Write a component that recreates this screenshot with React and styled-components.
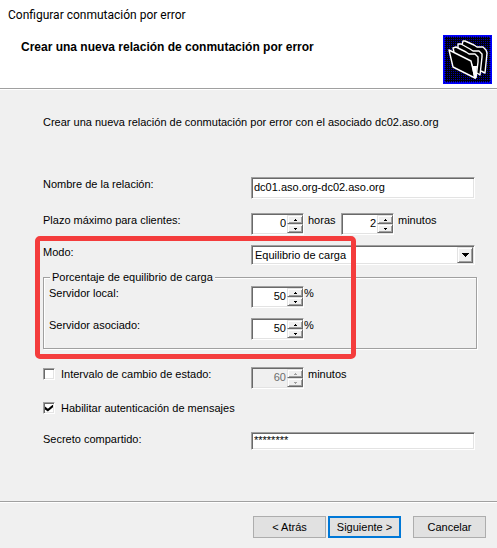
import React, { useState } from "react";
import styled, { createGlobalStyle, css } from "styled-components";

const GlobalStyle = createGlobalStyle`
  * {
    box-sizing: border-box;
  }

  body {
    margin: 0;
    background: #f0f0f0;
    color: #000;
    font-family: "Liberation Sans", Arial, sans-serif;
    font-size: 11px;
    line-height: 14px;
  }

  input, select, button {
    font: inherit;
    color: inherit;
  }
`;

const FoldersIcon = () => (
  <svg width="49" height="49" viewBox="0 0 49 49" aria-hidden="true">
    <defs>
      <pattern id="dots" width="2" height="2" patternUnits="userSpaceOnUse">
        <rect width="2" height="2" fill="#000008" />
        <rect width="1" height="1" fill="#0000a8" />
      </pattern>
      <pattern id="edge" width="2" height="2" patternUnits="userSpaceOnUse">
        <rect width="2" height="2" fill="#0000ff" />
        <rect x="1" y="1" width="1" height="1" fill="#0000a0" />
      </pattern>
    </defs>
    <rect width="49" height="49" fill="url(#edge)" />
    <rect x="2" y="2" width="45" height="45" fill="url(#dots)" />
    <g fill="#000" stroke="#fff" strokeWidth="1.4" strokeLinejoin="round">
      <path d="M19 10 20 6 22 6 31 10 34 12 40 12 43 15 44 18 42 38 38 36" />
      <path d="M15 13 15 9 18 9 27 14 30 16 36 16 39 19 39 22 37 40 34 38" />
      <path d="M11 17 10 13 13 12 23 17 26 19 32 19 35 22 35 27 33 43" />
      <path d="M6 15 28 26 32 43 10 32Z" />
    </g>
    <path d="M28 26 30 31 34 31 33 44 31 43Z" fill="#fff" />
  </svg>
);

const Spinner = ({ id, label, defaultValue, max, disabled }) => {
  const [value, setValue] = useState(defaultValue);

  const step = (amount) => {
    setValue(Math.min(max, Math.max(0, Number(value) + amount)));
  };

  return (
    <SpinBox $disabled={disabled}>
      <SpinInput
        id={id}
        type="number"
        aria-label={label}
        value={value}
        disabled={disabled}
        onChange={(e) => setValue(e.target.value)}
      />
      <SpinButtons>
        <SpinButton
          type="button"
          aria-label="Aumentar"
          disabled={disabled}
          onClick={() => step(1)}>
          <svg width="3" height="2" viewBox="0 0 3 2" shapeRendering="crispEdges">
            <path d="M1 0h1v1h1v1H0V1h1z" fill="currentColor" />
          </svg>
        </SpinButton>
        <SpinButton
          type="button"
          aria-label="Disminuir"
          disabled={disabled}
          onClick={() => step(-1)}>
          <svg width="3" height="2" viewBox="0 0 3 2" shapeRendering="crispEdges">
            <path d="M0 0h3v1H2v1H1V1H0z" fill="currentColor" />
          </svg>
        </SpinButton>
      </SpinButtons>
    </SpinBox>
  );
};

const App = () => {
  const [name, setName] = useState("dc01.aso.org-dc02.aso.org");
  const [mode, setMode] = useState("balance");
  const [interval, setInterval] = useState(false);
  const [auth, setAuth] = useState(true);
  const [secret, setSecret] = useState("********");

  return (
    <>
      <GlobalStyle />
      <Wrapper>
        <Header>
          <TitleBar>Configurar conmutación por error</TitleBar>
          <Banner>
            <Heading>Crear una nueva relación de conmutación por error</Heading>
            <FoldersIcon />
          </Banner>
        </Header>

        <Body>
          <Intro>
            Crear una nueva relación de conmutación por error con el asociado
            dc02.aso.org
          </Intro>

          <Form>
            <Row>
              <label htmlFor="name">Nombre de la relación:</label>
              <TextInput
                id="name"
                type="text"
                value={name}
                onChange={(e) => setName(e.target.value)}
              />
            </Row>
            <Row>
              <label htmlFor="hours">Plazo máximo para clientes:</label>
              <Fields>
                <Spinner id="hours" defaultValue={0} max={999} />
                <Unit>horas</Unit>
                <Spinner id="minutes" label="minutos" defaultValue={2} max={59} />
                <Unit>minutos</Unit>
              </Fields>
            </Row>

            <ModeSection>
              <Row>
                <label htmlFor="mode">Modo:</label>
                <SelectBox>
                  <Select
                    id="mode"
                    value={mode}
                    onChange={(e) => setMode(e.target.value)}>
                    <option value="balance">Equilibrio de carga</option>
                  </Select>
                  <SelectArrow>
                    <svg width="7" height="4" viewBox="0 0 7 4" shapeRendering="crispEdges">
                      <path d="M0 0h7v1H6v1H5v1H4v1H3V3H2V2H1V1H0z" />
                    </svg>
                  </SelectArrow>
                </SelectBox>
              </Row>
              <Group>
                <legend>Porcentaje de equilibrio de carga</legend>
                <GroupRow>
                  <label htmlFor="local">Servidor local:</label>
                  <Fields>
                    <Spinner id="local" defaultValue={50} max={100} />
                    <span>%</span>
                  </Fields>
                </GroupRow>
                <GroupRow>
                  <label htmlFor="partner">Servidor asociado:</label>
                  <Fields>
                    <Spinner id="partner" defaultValue={50} max={100} />
                    <span>%</span>
                  </Fields>
                </GroupRow>
              </Group>
              <Highlight />
            </ModeSection>

            <Row>
              <CheckLabel>
                <Checkbox
                  type="checkbox"
                  checked={interval}
                  onChange={(e) => setInterval(e.target.checked)}
                />
                Intervalo de cambio de estado:
              </CheckLabel>
              <Fields>
                <Spinner
                  label="Intervalo"
                  defaultValue={60}
                  max={999}
                  disabled={!interval}
                />
                <Unit>minutos</Unit>
              </Fields>
            </Row>
            <AuthLabel>
              <Checkbox
                type="checkbox"
                checked={auth}
                onChange={(e) => setAuth(e.target.checked)}
              />
              Habilitar autenticación de mensajes
            </AuthLabel>
            <Row>
              <label htmlFor="secret">Secreto compartido:</label>
              <SecretInput
                id="secret"
                type="text"
                value={secret}
                onChange={(e) => setSecret(e.target.value)}
              />
            </Row>
          </Form>
        </Body>

        <Footer>
          <Button type="button">&lt; Atrás</Button>
          <Button type="button" $primary>
            Siguiente &gt;
          </Button>
          <CancelButton type="button">Cancelar</CancelButton>
        </Footer>
      </Wrapper>
    </>
  );
};

export default App;

const sunken = css`
  border: 1px solid;
  border-color: #a0a0a0 #fff #fff #a0a0a0;
  box-shadow: inset 1px 1px #696969, inset -1px -1px #e3e3e3;
`;

const raised = css`
  background: #f0f0f0;
  border: 1px solid;
  border-color: #e3e3e3 #696969 #696969 #e3e3e3;
  box-shadow: inset 1px 1px #fff, inset -1px -1px #a0a0a0;
`;

const Wrapper = styled.div`
  display: flex;
  flex-direction: column;
  min-height: 100vh;
`;

const Header = styled.header`
  background: #fff;
  border-bottom: 1px solid #a0a0a0;
  box-shadow: 0 1px #fff;
`;

const TitleBar = styled.div`
  padding: 6px 8px 0;
  font-family: Roboto, sans-serif;
  font-size: 12px;
  line-height: 18px;
`;

const Banner = styled.div`
  display: flex;
  justify-content: space-between;
  align-items: flex-start;
  padding: 11px 5px 4px 21px;
`;

const Heading = styled.h1`
  margin: 0;
  padding-top: 5px;
  font-size: 12px;
  line-height: 14px;
  font-weight: bold;
`;

const Body = styled.main`
  flex: 1;
  padding: 26px 22px 0 43px;
`;

const Intro = styled.p`
  margin: 0 0 48px;
`;

const Form = styled.form`
  display: flex;
  flex-direction: column;
  gap: 14px;
`;

const Row = styled.div`
  display: grid;
  grid-template-columns: 208px 1fr;
  align-items: start;
`;

const Fields = styled.div`
  display: flex;
  align-items: flex-start;
`;

const Unit = styled.span`
  min-width: 37px;
  padding-left: 4px;
`;

const TextInput = styled.input`
  ${sunken}
  width: 100%;
  height: 22px;
  padding: 0 2px 2px;
  background: #fff;
  border-radius: 0;
  outline: none;
`;

const SecretInput = styled(TextInput)`
  height: 18px;
`;

const SpinBox = styled.div`
  ${sunken}
  display: flex;
  width: 53px;
  height: 22px;
  padding: 1px 0 1px 1px;
  background: ${(props) => (props.$disabled ? "#f0f0f0" : "#fff")};
`;

const SpinInput = styled.input`
  flex: 1;
  min-width: 0;
  padding: 0 1px 2px 0;
  border: 0;
  outline: none;
  background: transparent;
  text-align: right;
  appearance: textfield;

  &::-webkit-inner-spin-button {
    appearance: none;
    margin: 0;
  }

  &:disabled {
    color: #6d6d6d;
  }
`;

const SpinButtons = styled.div`
  display: flex;
  flex-direction: column;
  width: 16px;
`;

const SpinButton = styled.button`
  ${raised}
  display: flex;
  flex: 1;
  align-items: center;
  justify-content: center;
  min-height: 0;
  padding: 0;

  &:disabled {
    color: #a0a0a0;
  }
`;

const ModeSection = styled.div`
  position: relative;
  margin: -4px 0 4px;
`;

const SelectBox = styled.div`
  ${sunken}
  position: relative;
  height: 20px;
  padding: 1px;
  background: #fff;
`;

const Select = styled.select`
  display: block;
  width: 100%;
  height: 16px;
  padding: 0 18px 0 2px;
  border: 0;
  outline: none;
  background: transparent;
  appearance: none;
`;

const SelectArrow = styled.span`
  ${raised}
  position: absolute;
  top: 1px;
  right: 1px;
  bottom: 1px;
  display: flex;
  align-items: center;
  justify-content: center;
  width: 16px;
  pointer-events: none;
`;

const Group = styled.fieldset`
  display: flex;
  flex-direction: column;
  gap: 10px;
  margin: 5px -2px 0 0;
  padding: 2px 0 8px 5px;
  border: 1px solid #a0a0a0;
  box-shadow: 1px 1px #fff, inset 1px 1px #fff;

  legend {
    margin-left: 1px;
    padding: 0 2px;
    background: #f0f0f0;
  }
`;

const GroupRow = styled(Row)`
  grid-template-columns: 202px 1fr;
`;

const Highlight = styled.div`
  position: absolute;
  top: -9px;
  left: -8px;
  right: 119px;
  bottom: -10px;
  border: 5px solid #f43c3c;
  border-radius: 5px;
  pointer-events: none;
`;

const CheckLabel = styled.label`
  display: flex;
  align-items: center;
  gap: 6px;
`;

const AuthLabel = styled(CheckLabel)`
  align-self: flex-start;
  margin: -2px 0 3px;
`;

const Checkbox = styled.input`
  ${sunken}
  appearance: none;
  display: grid;
  place-items: center;
  width: 12px;
  height: 12px;
  margin: 0;
  background: #fff;

  &:checked::after {
    content: "";
    width: 8px;
    height: 7px;
    background: #000;
    clip-path: polygon(0 30%, 36% 62%, 100% 0, 100% 40%, 36% 100%, 0 70%);
  }
`;

const Footer = styled.footer`
  display: flex;
  justify-content: flex-end;
  gap: 2px;
  padding: 14px 11px 10px 0;
  border-top: 1px solid #a0a0a0;
  box-shadow: inset 0 1px #fff;
`;

const Button = styled.button`
  width: 73px;
  height: 22px;
  padding: 0;
  background: #e1e1e1;
  border: ${(props) =>
    props.$primary ? "2px solid #0078d7" : "1px solid #adadad"};
`;

const CancelButton = styled(Button)`
  margin-left: 10px;
`;
